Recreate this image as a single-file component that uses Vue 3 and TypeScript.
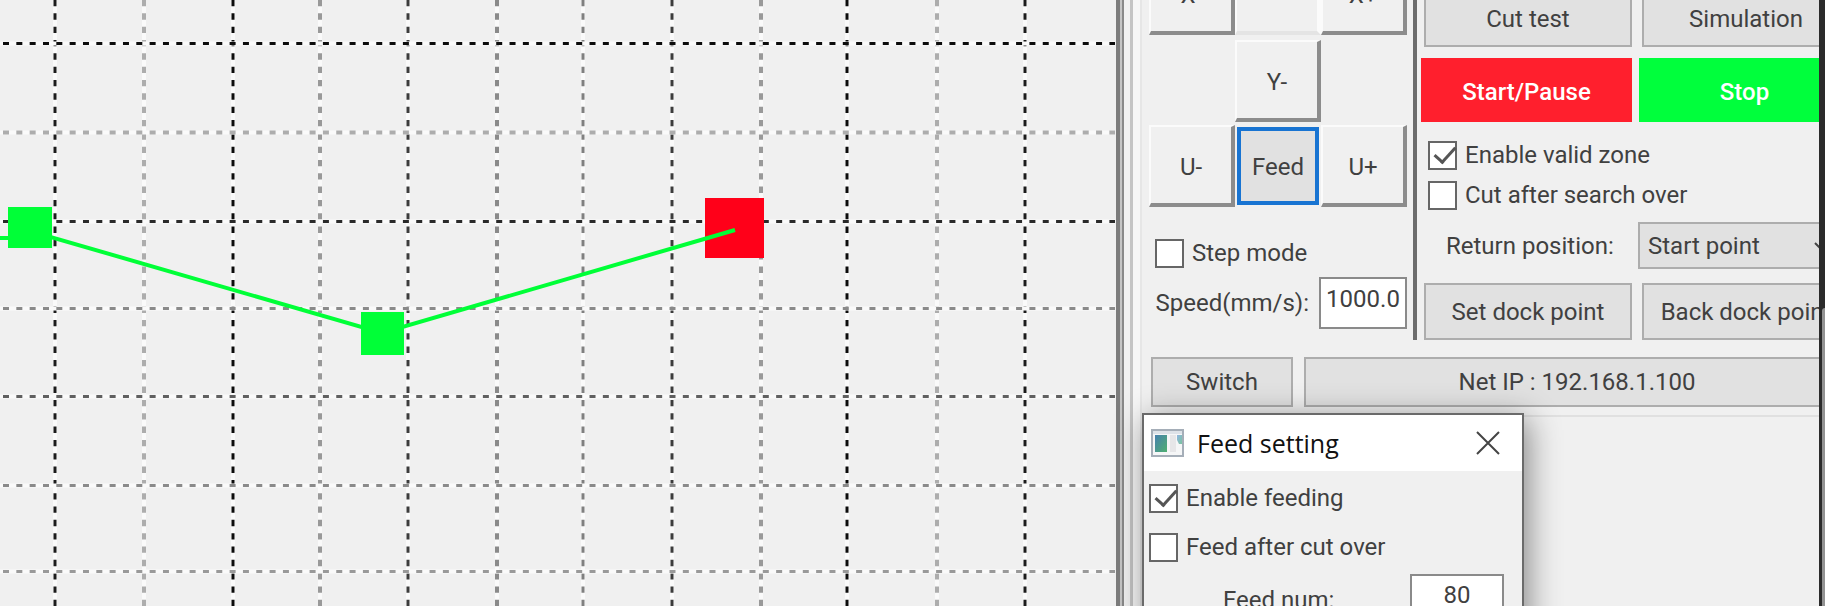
<script setup lang="ts">
import { ref } from 'vue'

interface GridLine {
  at: number
  tone: string
  width: number
}

const columns: GridLine[] = [
  { at: 55, tone: '#1c1c1c', width: 3 },
  { at: 144, tone: '#adadad', width: 4 },
  { at: 233, tone: '#0c0c0c', width: 3 },
  { at: 320, tone: '#999999', width: 4 },
  { at: 408, tone: '#3c3c3c', width: 3 },
  { at: 497, tone: '#8a8a8a', width: 4 },
  { at: 583, tone: '#808080', width: 3 },
  { at: 672, tone: '#3c3c3c', width: 3 },
  { at: 761, tone: '#999999', width: 4 },
  { at: 847, tone: '#0c0c0c', width: 3 },
  { at: 937, tone: '#adadad', width: 4 },
  { at: 1025, tone: '#1c1c1c', width: 3 },
]

const rows: GridLine[] = [
  { at: 43, tone: '#0c0c0c', width: 3 },
  { at: 132, tone: '#adadad', width: 4 },
  { at: 221, tone: '#2a2a2a', width: 3 },
  { at: 308, tone: '#8a8a8a', width: 3 },
  { at: 396, tone: '#606060', width: 3 },
  { at: 485, tone: '#8a8a8a', width: 3 },
  { at: 571, tone: '#999999', width: 3 },
]

const validZone = ref(true)
const cutAfterSearch = ref(false)
const stepMode = ref(false)
const speed = ref('1000.0')
const returnTo = ref('start')
const enableFeeding = ref(true)
const feedAfterCut = ref(false)
const feedNum = ref('80')
</script>

<template>
  <main class="app">
    <svg class="plot" role="img" aria-label="Cutting path">
      <g v-for="line in columns" :key="'c' + line.at">
        <line class="halo" :x1="line.at" y1="0" :x2="line.at" y2="100%" />
        <line class="dash dash-y" :x1="line.at" y1="0" :x2="line.at" y2="100%" :stroke="line.tone" :stroke-width="line.width" />
      </g>
      <g v-for="line in rows" :key="'r' + line.at">
        <line class="halo" x1="0" :y1="line.at + 0.5" x2="100%" :y2="line.at + 0.5" />
        <line class="dash dash-x" x1="0" :y1="line.at + 0.5" x2="100%" :y2="line.at + 0.5" :stroke="line.tone" :stroke-width="line.width" />
      </g>
      <rect x="705" y="198" width="59" height="60" fill="#ff0019" />
      <polyline class="path" points="-4,238 10,238 30,231 382,333 735,230" />
      <rect x="8" y="207" width="44" height="41" fill="#00ff37" />
      <rect x="361" y="312" width="43" height="43" fill="#00ff37" />
    </svg>

    <div class="splitter"></div>

    <section class="panel">
      <div class="upper">
        <div class="motion">
          <div class="pad">
            <button class="key" type="button">X-</button>
            <button class="key flat" type="button" aria-label="Origin"></button>
            <button class="key" type="button">X+</button>
            <span></span>
            <button class="key" type="button">Y-</button>
            <span></span>
            <button class="key" type="button">U-</button>
            <button class="key feed" type="button">Feed</button>
            <button class="key" type="button">U+</button>
          </div>
          <label class="check step"><input v-model="stepMode" type="checkbox" />Step mode</label>
          <div class="speed">
            <label for="speed">Speed(mm/s):</label>
            <input id="speed" v-model="speed" class="field" type="text" />
          </div>
        </div>

        <div class="actions">
          <div class="pair first">
            <button class="btn tall" type="button">Cut test</button>
            <button class="btn tall" type="button">Simulation</button>
          </div>
          <div class="pair run">
            <button class="btn start" type="button">Start/Pause</button>
            <button class="btn stop" type="button">Stop</button>
          </div>
          <label class="check"><input v-model="validZone" type="checkbox" />Enable valid zone</label>
          <label class="check"><input v-model="cutAfterSearch" type="checkbox" />Cut after search over</label>
          <div class="return">
            <label for="return">Return position:</label>
            <div class="drop">
              <select id="return" v-model="returnTo">
                <option value="start">Start point</option>
                <option value="dock">Dock point</option>
              </select>
              <svg class="arrow" viewBox="0 0 14 8" aria-hidden="true"><path d="M1 1l6 6 6-6" /></svg>
            </div>
          </div>
          <div class="pair">
            <button class="btn tall" type="button">Set dock point</button>
            <button class="btn tall" type="button">Back dock point</button>
          </div>
        </div>
      </div>

      <div class="net">
        <button class="btn" type="button">Switch</button>
        <button class="btn" type="button">Net IP : 192.168.1.100</button>
      </div>

      <div class="lower">
        <section class="dialog" role="dialog" aria-labelledby="dialog-title">
          <header class="title">
            <svg class="app-icon" viewBox="0 0 33 28" aria-hidden="true">
              <defs>
                <linearGradient id="screen" x1="0" y1="0" x2="1" y2="1">
                  <stop offset="0" stop-color="#4680ae" />
                  <stop offset="1" stop-color="#4fb070" />
                </linearGradient>
                <linearGradient id="side" x1="0" y1="0" x2="1" y2="1">
                  <stop offset="0" stop-color="#8fb4e0" />
                  <stop offset="1" stop-color="#7cc4a0" />
                </linearGradient>
              </defs>
              <rect x="1" y="1" width="31" height="26" fill="#f5f6f7" stroke="#a5aeb8" stroke-width="2" />
              <rect x="2" y="2" width="29" height="3" fill="#dde2e8" />
              <rect x="4" y="6" width="12" height="17" fill="url(#screen)" />
              <rect x="19" y="6" width="6" height="17" fill="#e6e6e8" />
              <path d="M26 6h5v9h-3l-2-4z" fill="url(#side)" />
            </svg>
            <h1 id="dialog-title">Feed setting</h1>
            <button class="close" type="button" aria-label="Close">
              <svg viewBox="0 0 24 24" aria-hidden="true"><path d="M1 1l22 22M23 1L1 23" /></svg>
            </button>
          </header>
          <div class="body">
            <label class="check"><input v-model="enableFeeding" type="checkbox" />Enable feeding</label>
            <label class="check"><input v-model="feedAfterCut" type="checkbox" />Feed after cut over</label>
            <div class="num">
              <label for="feed-num">Feed num:</label>
              <input id="feed-num" v-model="feedNum" class="field" type="text" />
            </div>
          </div>
        </section>
      </div>
    </section>

    <div class="edge"><div class="thumb"></div></div>
  </main>
</template>

<style>
body {
  margin: 0;
  background: #f0f0f0;
}
</style>

<style scoped>
.app {
  display: flex;
  height: 100vh;
  overflow: hidden;
  background: #f0f0f0;
  color: #404040;
  font-family: Roboto, "Liberation Sans", sans-serif;
  font-size: 24px;
  line-height: 32px;
}

.app *,
.app {
  box-sizing: border-box;
}

button,
input,
select {
  font: inherit;
  color: inherit;
  margin: 0;
  padding: 0;
  border-radius: 0;
}

.plot {
  flex: 1;
  min-width: 0;
  height: 100%;
  overflow: hidden;
}

.halo {
  stroke: #fafafa;
  stroke-width: 4;
}

.dash-x {
  stroke-dasharray: 6 7.33;
  stroke-dashoffset: -3;
}

.dash-y {
  stroke-dasharray: 6.33 7;
}

.path {
  fill: none;
  stroke: #00ff37;
  stroke-width: 4;
}

.splitter {
  flex: none;
  width: 27px;
  background: linear-gradient(
    90deg,
    #f0f0f0 0 1px,
    #7c7c7c 1px 5px,
    #c4c4c4 5px 7px,
    #888888 7px 9px,
    #f0f0f0 9px 15px,
    #c4c4c4 15px 18px,
    #f6f6f6 18px 25px,
    #e6e6e6 25px 27px
  );
}

.panel {
  flex: none;
  display: flex;
  flex-direction: column;
  width: 677px;
}

.edge {
  position: relative;
  z-index: 2;
  flex: none;
  width: 6px;
  padding: 308px 0 0 3px;
  background: #2b2b2b;
}

.thumb {
  height: 100%;
  border-top-left-radius: 3px;
  background: #939393;
}

.upper {
  display: flex;
  height: 340px;
}

.motion {
  flex: none;
  width: 275px;
  padding-left: 7px;
  border-right: 4px solid #6c6c6c;
}

.pad {
  display: grid;
  grid-template-columns: repeat(3, 86px);
  grid-template-rows: 82px 5px 82px 3px 82px;
  margin-top: -47px;
}

.pad > :nth-child(n + 4) {
  grid-row: 3;
}

.pad > :nth-child(n + 7) {
  grid-row: 5;
}

.key {
  padding-top: 4px;
  border: 2px solid;
  border-color: #fbfbfb #8c8c8c #8c8c8c #fbfbfb;
  border-right-width: 4px;
  border-bottom-width: 4px;
  background: #f0f0f0;
}

.pad > .flat {
  border-color: #fbfbfb;
  border-bottom-color: #e4e4e4;
}

.feed {
  margin: 2px;
  padding-top: 2px;
  border: 4px solid #1874d2;
  background: #e1e1e1;
}

.check {
  display: flex;
  align-items: center;
  gap: 8px;
  height: 40px;
  white-space: nowrap;
}

.check input {
  appearance: none;
  flex: none;
  width: 29px;
  height: 29px;
  border: 2px solid #666;
  background: #fff;
}

.check input:checked {
  display: grid;
}

.check input:checked::before {
  content: "";
  width: 9px;
  height: 18px;
  margin: -1px 0 0 9px;
  border: solid #555;
  border-width: 0 3px 3px 0;
  transform: rotate(42deg);
}

.step {
  margin: 26px 0 0 6px;
}

.speed {
  display: flex;
  align-items: center;
  justify-content: flex-end;
  gap: 10px;
  margin-top: 4px;
  padding-right: 6px;
}

.field {
  width: 88px;
  height: 52px;
  border: 2px solid #8a8a8a;
  background: #fff;
  text-align: center;
}

.speed .field {
  padding-bottom: 8px;
}

.actions {
  flex: none;
  width: 440px;
  padding-left: 7px;
}

.pair {
  display: grid;
  grid-template-columns: 208px 208px;
  gap: 10px;
}

.btn {
  height: 50px;
  border: 2px solid #adadad;
  background: #e1e1e1;
}

.tall {
  height: 57px;
}

.first {
  margin-top: -10px;
}

.run {
  grid-template-columns: 211px 211px;
  gap: 7px;
  margin: 11px 0 13px -3px;
}

.run .btn {
  height: 64px;
  padding-top: 3px;
  border: 0;
  color: #fff;
  font-weight: 500;
}

.run .start {
  background: #ff1f2d;
}

.run .stop {
  background: #00ff3c;
}

.actions .check {
  margin-left: 4px;
}

.return {
  display: flex;
  align-items: center;
  justify-content: space-between;
  margin: 7px 0 14px 22px;
}

.drop {
  display: grid;
  align-items: center;
  width: 218px;
}

.drop select {
  grid-area: 1 / 1;
  appearance: none;
  height: 47px;
  padding-left: 8px;
  border: 2px solid #adadad;
  background: #e1e1e1;
}

.arrow {
  grid-area: 1 / 1;
  justify-self: end;
  width: 14px;
  height: 8px;
  margin-right: 28px;
  fill: none;
  stroke: #444;
  stroke-width: 2;
  pointer-events: none;
}

.return .drop {
  margin-right: 1px;
}

.net {
  display: grid;
  grid-template-columns: 142px 546px;
  gap: 11px;
  margin: 17px 0 8px 9px;
}

.lower {
  flex: 1;
  border-top: 2px solid #e0e0e0;
}

.dialog {
  position: relative;
  width: 382px;
  height: 400px;
  margin-top: -4px;
  border: 2px solid #6a6a6a;
  background: #f0f0f0;
  box-shadow: 4px 6px 30px rgb(0 0 0 / 45%);
}

.title {
  display: flex;
  align-items: center;
  height: 56px;
  padding: 0 22px 0 7px;
  background: #fff;
}

.app-icon {
  width: 33px;
  height: 28px;
}

h1 {
  flex: 1;
  margin: 0 0 0 13px;
  color: #111;
  font: 400 25px/32px "Open Sans", "Noto Sans", sans-serif;
}

.close {
  width: 24px;
  height: 24px;
  border: 0;
  background: none;
}

.close svg {
  display: block;
  width: 24px;
  height: 24px;
  fill: none;
  stroke: #444;
  stroke-width: 2;
}

.body {
  display: grid;
  gap: 9px;
  padding: 7px 18px 0 5px;
}

.num {
  display: flex;
  align-items: center;
  justify-content: space-between;
  margin-top: -2px;
  padding-left: 74px;
}

.num .field {
  width: 94px;
  padding-bottom: 10px;
}
</style>
